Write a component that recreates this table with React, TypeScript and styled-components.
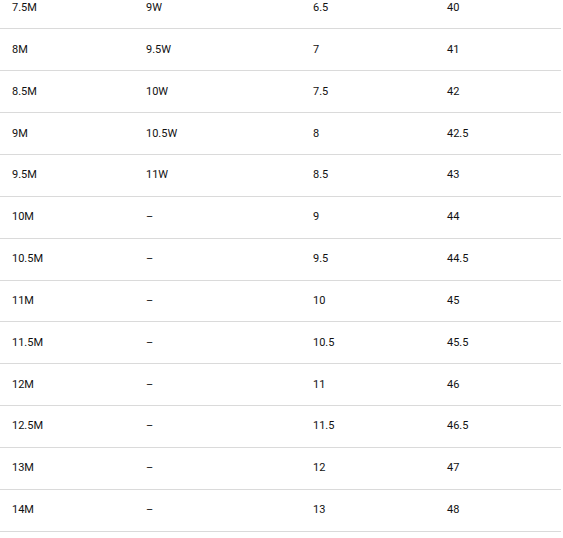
import React from 'react';
import styled, { createGlobalStyle } from 'styled-components';

const GlobalStyle = createGlobalStyle`
  html, body {
    margin: 0;
    padding: 0;
    background: #ffffff;
  }
  body {
    font-family: Roboto, "Liberation Sans", sans-serif;
    color: #111111;
  }
`;

const Viewport = styled.div`
  width: 563px;
  height: 538px;
  overflow: hidden;
`;

const Table = styled.div`
  width: 561px;
  margin-top: -12.4px;
`;

const Row = styled.div`
  display: grid;
  grid-template-columns: 134px 167px 134px 1fr;
  align-items: center;
  height: 41.85px;
  box-sizing: border-box;
  border-bottom: 1px solid #dadada;
`;

const Cell = styled.div`
  padding-left: 12px;
  font-size: 11px;
  line-height: 16px;
  color: #111111;
`;

const rows: string[][] = [
  ['7.5M', '9W', '6.5', '40'],
  ['8M', '9.5W', '7', '41'],
  ['8.5M', '10W', '7.5', '42'],
  ['9M', '10.5W', '8', '42.5'],
  ['9.5M', '11W', '8.5', '43'],
  ['10M', '–', '9', '44'],
  ['10.5M', '–', '9.5', '44.5'],
  ['11M', '–', '10', '45'],
  ['11.5M', '–', '10.5', '45.5'],
  ['12M', '–', '11', '46'],
  ['12.5M', '–', '11.5', '46.5'],
  ['13M', '–', '12', '47'],
  ['14M', '–', '13', '48'],
];

export default function App() {
  return (
    <>
      <GlobalStyle />
      <Viewport>
        <Table>
          {rows.map((r) => (
            <Row key={r[0]}>
              {r.map((c, i) => (
                <Cell key={i}>{c}</Cell>
              ))}
            </Row>
          ))}
        </Table>
      </Viewport>
    </>
  );
}
